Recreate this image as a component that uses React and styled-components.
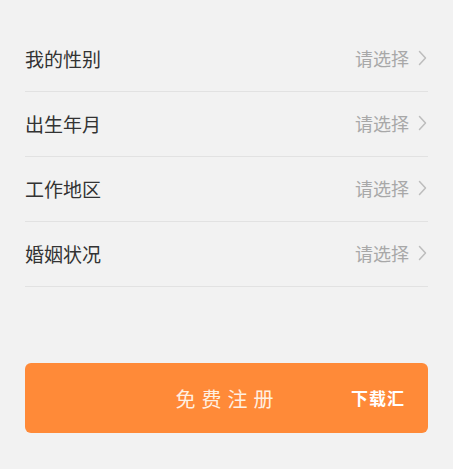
import React from "react";
import styled, { createGlobalStyle } from "styled-components";

const Global = createGlobalStyle`
  html, body { margin: 0; padding: 0; background: #f2f2f2; }
  body { font-family: "Noto Sans CJK SC", "Noto Sans", sans-serif; }
`;

const Page = styled.div`
  padding: 27px 25px 0 25px;
  display: flex;
  flex-direction: column;
`;

const List = styled.div`
  display: flex;
  flex-direction: column;
`;

const Row = styled.div`
  height: 64px;
  display: flex;
  align-items: center;
  justify-content: space-between;
  border-bottom: 1px solid #e2e2e2;
`;

const Label = styled.span`
  font-size: 19px;
  color: #333;
  line-height: 1;
  margin-top: -2px;
`;

const Value = styled.span`
  display: flex;
  align-items: center;
  gap: 9px;
  font-size: 18px;
  color: #a8a8a8;
  line-height: 1;
  margin-top: -2px;
  margin-right: 1px;
`;

const Chevron = () => (
  <svg width="9" height="16" viewBox="0 0 9 16" fill="none">
    <path d="M1.5 1.5 L7.5 8 L1.5 14.5" stroke="#bdbdbd" strokeWidth="1.5" strokeLinecap="round" strokeLinejoin="round" />
  </svg>
);

const Button = styled.div`
  margin-top: 76px;
  height: 70px;
  border-radius: 6px;
  background: #ff8a38;
  position: relative;
  display: flex;
  align-items: center;
  justify-content: center;
`;

const ButtonText = styled.span`
  font-size: 20px;
  letter-spacing: 6px;
  color: #fff0e2;
  margin-left: 2px;
`;

const Badge = styled.span`
  position: absolute;
  right: 23px;
  top: 50%;
  transform: translateY(-52%);
  font-size: 17px;
  font-weight: 700;
  letter-spacing: 1px;
  color: #ffffff;
`;

const items = ["我的性别", "出生年月", "工作地区", "婚姻状况"];

export default function App() {
  return (
    <>
      <Global />
      <Page>
        <List>
          {items.map((t) => (
            <Row key={t}>
              <Label>{t}</Label>
              <Value>
                请选择
                <Chevron />
              </Value>
            </Row>
          ))}
        </List>
        <Button>
          <ButtonText>免费注册</ButtonText>
          <Badge>下载汇</Badge>
        </Button>
      </Page>
    </>
  );
}
